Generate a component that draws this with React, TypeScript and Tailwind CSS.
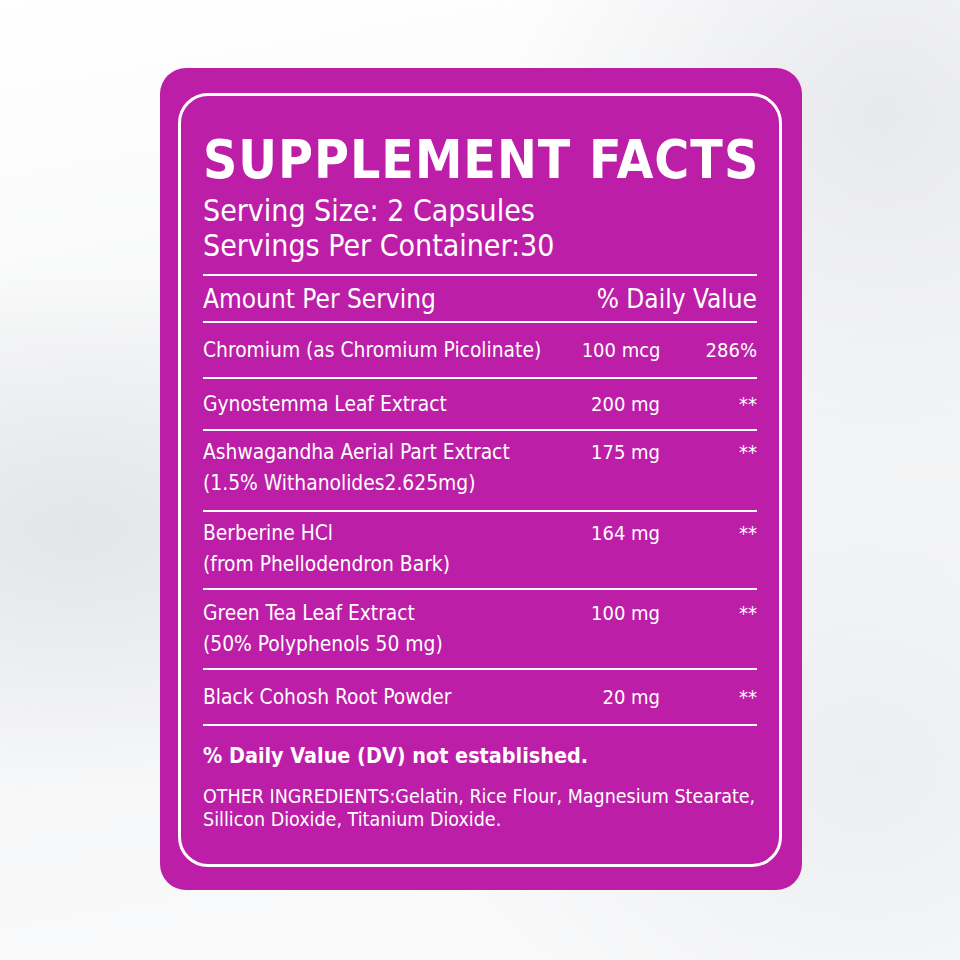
const font = "font-['DejaVu_Sans_Condensed','DejaVu_Sans',sans-serif] font-stretch-condensed"

function Rule() {
  return <div className="h-[2px] w-full bg-white" />
}

export default function App() {
  return (
    <div className="h-[960px] w-full overflow-hidden bg-[#f5f6f7] bg-[radial-gradient(ellipse_at_8%_55%,#e3e5e8_0%,transparent_35%),radial-gradient(ellipse_at_92%_12%,#e8e9ec_0%,transparent_30%),radial-gradient(ellipse_at_90%_80%,#eceef0_0%,transparent_35%),linear-gradient(170deg,#ffffff_0%,#f4f5f6_50%,#fbfbfc_100%)] pt-[68px]">
      <div className="ml-[160px] h-[822px] w-[642px] rounded-[26px] bg-[#bc1ea8] pb-[23px] pl-[18px] pr-[20px] pt-[25px]">
        <div className={`h-full w-full rounded-[30px] border-[3px] border-white px-[22px] pt-[40px] text-white ${font}`}>
          <div className="flex h-[46px] items-center whitespace-nowrap text-[53px] font-bold leading-none tracking-[1px]">
            SUPPLEMENT FACTS
          </div>

          <div className="mt-[11px] flex h-[35px] items-center text-[30px] leading-none">Serving Size: 2 Capsules</div>
          <div className="flex h-[35px] items-center text-[30px] leading-none">Servings Per Container:30</div>

          <div className="mt-[11px]">
            <Rule />
          </div>
          <div className="flex h-[45px] items-center justify-between text-[26px] leading-none">
            <span>Amount Per Serving</span>
            <span>% Daily Value</span>
          </div>
          <Rule />

          <Row h="h-[54px]" lines={["Chromium (as Chromium Picolinate)"]} amount="100 mcg" dv="286%" />
          <Rule />
          <Row h="h-[50px]" lines={["Gynostemma Leaf Extract"]} amount="200 mg" dv="**" />
          <Rule />
          <Row
            h="h-[79px]"
            pt="pt-[6px]"
            lines={["Ashwagandha Aerial Part Extract", "(1.5% Withanolides2.625mg)"]}
            amount="175 mg"
            dv="**"
          />
          <Rule />
          <Row
            h="h-[76px]"
            pt="pt-[6px]"
            lines={["Berberine HCl", "(from Phellodendron Bark)"]}
            amount="164 mg"
            dv="**"
          />
          <Rule />
          <Row
            h="h-[78px]"
            pt="pt-[8px]"
            lines={["Green Tea Leaf Extract", "(50% Polyphenols 50 mg)"]}
            amount="100 mg"
            dv="**"
          />
          <Rule />
          <Row h="h-[54px]" lines={["Black Cohosh Root Powder"]} amount="20 mg" dv="**" />
          <Rule />

          <div className="mt-[14px] flex h-[32px] items-center whitespace-nowrap text-[21.4px] font-bold leading-none">
            % Daily Value (DV) not established.
          </div>
          <div className="mt-[13px] whitespace-nowrap text-[19.5px] leading-[23px]">
            OTHER INGREDIENTS:Gelatin, Rice Flour, Magnesium Stearate,
            <br />
            Sillicon Dioxide, Titanium Dioxide.
          </div>
        </div>
      </div>
    </div>
  )
}

function Row({
  h,
  pt,
  lines,
  amount,
  dv,
}: {
  h: string
  pt?: string
  lines: string[]
  amount: string
  dv: string
}) {
  const single = lines.length === 1
  return (
    <div className={`flex text-[20px] ${h} ${single ? "items-center leading-none" : `items-start leading-[31px] ${pt ?? ""}`}`}>
      <div className="flex-1 whitespace-nowrap text-[20.8px]">
        {lines.map((l) => (
          <div key={l}>{l}</div>
        ))}
      </div>
      <div className="w-[120px] text-right">{amount}</div>
      <div className="w-[97px] text-right">{dv}</div>
    </div>
  )
}
